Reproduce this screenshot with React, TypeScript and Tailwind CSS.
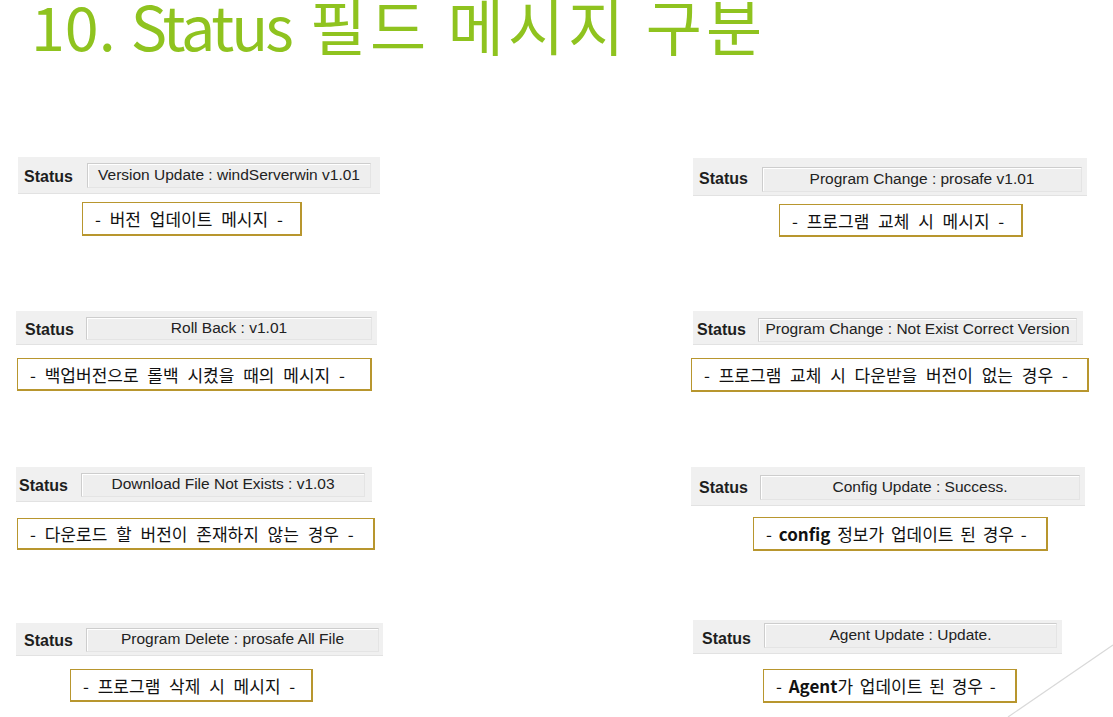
import React from "react";

type StripProps = {
  strip: string;
  label: string;
  field: string;
  text: string;
};

function Strip({ strip, label, field, text }: StripProps) {
  return (
    <div className={`flex items-start bg-[#f0f0f0] border-b border-[#e2e2e2] ${strip}`}>
      <div className={`flex self-stretch items-center pt-[4px] shrink-0 ${label}`}>
        <span className="font-['Liberation_Sans',Arial,sans-serif] font-bold text-[16px] leading-none text-[#1e1e1e]">
          Status
        </span>
      </div>
      <div
        className={`flex items-center justify-center shrink-0 bg-[#eeeeee] border border-[#cdcdcd] border-b-[#e4e4e4] border-r-[#e4e4e4] shadow-[inset_1px_1px_0_#ffffff] pb-[2px] whitespace-nowrap overflow-hidden font-['Liberation_Sans',Arial,sans-serif] text-[15.5px] leading-none text-[#222222] ${field}`}
      >
        {text}
      </div>
    </div>
  );
}

function Box({ cls, children }: { cls: string; children: React.ReactNode }) {
  return (
    <div
      className={`flex items-center pl-[12px] bg-white border border-[#b8962e] border-r-2 border-b-2 whitespace-nowrap font-['Noto_Sans_CJK_KR','Noto_Sans',sans-serif] text-[17px] leading-none text-[#111111] ${cls}`}
    >
      {children}
    </div>
  );
}

export default function App() {
  return (
    <div className="w-[1113px] h-[717px] bg-white overflow-hidden relative flex flex-col">
      <div className="h-[80px] shrink-0">
        <h1 className="ml-[31px] mt-[-6px] font-['Noto_Sans_CJK_KR','Noto_Sans',sans-serif] text-[61px] leading-[61px] text-[#8fc31f] whitespace-nowrap">
          <span>10.</span>
          <span className="ml-[15px] tracking-[-3px]">Status</span>
          <span className="ml-[19px] tracking-[4px]">필드 메시지 구분</span>
        </h1>
      </div>
      <div className="flex">
        {/* Left column */}
        <div className="w-[690px] shrink-0 flex flex-col items-start">
          <Strip
            strip="mt-[77px] ml-[18px] w-[362px] h-[37px]"
            label="pl-[6px] w-[69px]"
            field="mt-[6px] w-[284px] h-[25px]"
            text="Version Update : windServerwin v1.01"
          />
          <Box cls="mt-[8px] ml-[82px] w-[220px] h-[34px] [word-spacing:5px]">- 버전 업데이트 메시지 -</Box>

          <Strip
            strip="mt-[75px] ml-[16px] w-[361px] h-[34px]"
            label="pl-[9px] w-[70px]"
            field="mt-[6px] w-[286px] h-[23px]"
            text="Roll Back : v1.01"
          />
          <Box cls="mt-[13px] ml-[17px] w-[355px] h-[33px] [word-spacing:5px]">- 백업버전으로 롤백 시켰을 때의 메시지 -</Box>

          <Strip
            strip="mt-[76px] ml-[16px] w-[356px] h-[35px]"
            label="pl-[3px] w-[65px]"
            field="mt-[6px] w-[284px] h-[24px]"
            text="Download File Not Exists : v1.03"
          />
          <Box cls="mt-[16px] ml-[17px] w-[358px] h-[32px] [word-spacing:5px]">- 다운로드 할 버전이 존재하지 않는 경우 -</Box>

          <Strip
            strip="mt-[73px] ml-[16px] w-[367px] h-[33px]"
            label="pl-[8px] w-[70px]"
            field="mt-[5px] w-[293px] h-[24px]"
            text="Program Delete : prosafe All File"
          />
          <Box cls="mt-[13px] ml-[70px] w-[243px] h-[33px] [word-spacing:5px]">- 프로그램 삭제 시 메시지 -</Box>
        </div>

        {/* Right column */}
        <div className="flex-1 flex flex-col items-start">
          <Strip
            strip="mt-[78px] ml-[3px] w-[394px] h-[38px]"
            label="pl-[6px] w-[69px]"
            field="mt-[9px] w-[320px] h-[25px]"
            text="Program Change : prosafe v1.01"
          />
          <Box cls="mt-[8px] ml-[89px] w-[244px] h-[33px] [word-spacing:5px]">- 프로그램 교체 시 메시지 -</Box>

          <Strip
            strip="mt-[74px] ml-[3px] w-[390px] h-[34px]"
            label="pl-[4px] w-[65px]"
            field="mt-[7px] w-[319px] h-[24px]"
            text="Program Change : Not Exist Correct Version"
          />
          <Box cls="mt-[13px] ml-[1px] w-[398px] h-[34px] [word-spacing:5px]">- 프로그램 교체 시 다운받을 버전이 없는 경우 -</Box>

          <Strip
            strip="mt-[75px] ml-[1px] w-[394px] h-[39px]"
            label="pl-[8px] w-[69px]"
            field="mt-[8px] w-[320px] h-[25px]"
            text="Config Update : Success."
          />
          <Box cls="mt-[11px] ml-[63px] w-[295px] h-[34px] [word-spacing:3px]">
            <span>
              - <span className="font-bold">config</span> 정보가 업데이트 된 경우 -
            </span>
          </Box>

          <Strip
            strip="mt-[69px] ml-[3px] w-[369px] h-[34px]"
            label="pl-[9px] w-[71px]"
            field="mt-[3px] w-[293px] h-[25px]"
            text="Agent Update : Update."
          />
          <Box cls="mt-[15px] ml-[73px] w-[254px] h-[34px] [word-spacing:3px]">
            <span>
              - <span className="font-bold">Agent</span>가 업데이트 된 경우 -
            </span>
          </Box>
        </div>
      </div>

      {/* decorative slide line */}
      <svg className="absolute left-0 top-0 pointer-events-none" width="1113" height="717" viewBox="0 0 1113 717">
        <line x1="1008" y1="717" x2="1113" y2="645" stroke="#d9d9d9" strokeWidth="1.2" />
      </svg>
    </div>
  );
}
